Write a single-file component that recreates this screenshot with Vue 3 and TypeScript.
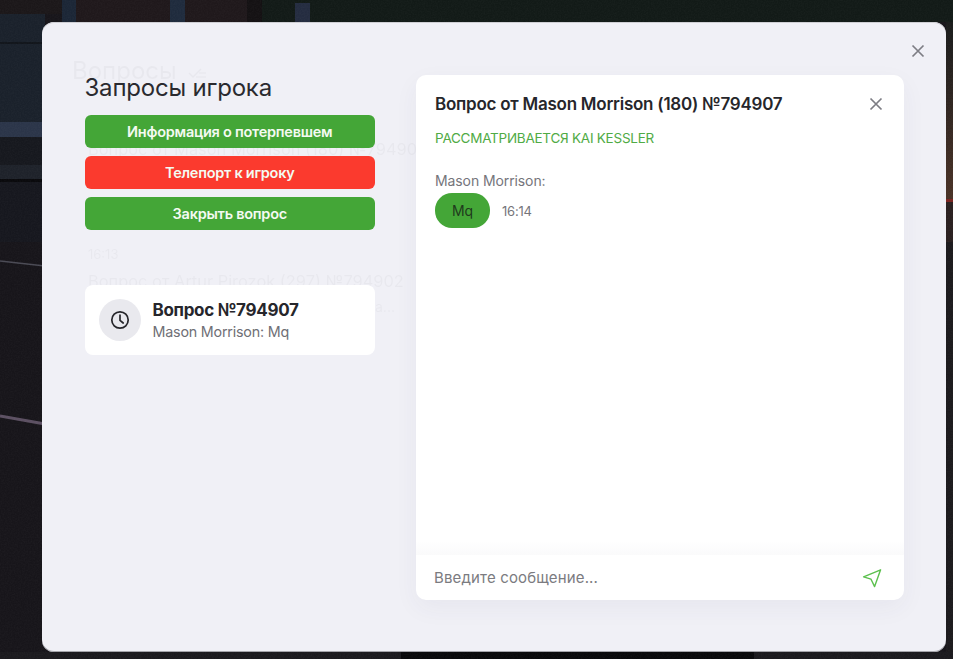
<script setup lang="ts">
const actions = [
  { label: 'Информация о потерпевшем', tone: 'green' },
  { label: 'Телепорт к игроку', tone: 'red' },
  { label: 'Закрыть вопрос', tone: 'green' },
]
</script>

<template>
  <div class="screen">
    <svg class="scene" width="953" height="659" viewBox="0 0 953 659" aria-hidden="true">
      <defs>
        <filter id="grain" x="0" y="0" width="100%" height="100%">
          <feTurbulence type="fractalNoise" baseFrequency="0.7" numOctaves="2" seed="4" />
          <feColorMatrix values="0 0 0 0 1  0 0 0 0 1  0 0 0 0 1  0.5 0 0 0 -0.15" />
        </filter>
        <linearGradient id="glow" x1="0" y1="0" x2="0" y2="1">
          <stop offset="0" stop-color="#1a1c1c" />
          <stop offset="0.4" stop-color="#2c2420" />
          <stop offset="1" stop-color="#4a3226" />
        </linearGradient>
      </defs>
      <rect width="953" height="659" fill="#17151a" />
      <rect x="0" y="0" width="62" height="14" fill="#1b1719" />
      <rect x="0" y="14" width="45" height="110" fill="#1a212b" />
      <rect x="0" y="42" width="45" height="2" fill="#11151b" />
      <rect x="0" y="122" width="45" height="15" fill="#2b3549" />
      <rect x="0" y="137" width="45" height="28" fill="#16181e" />
      <rect x="0" y="165" width="45" height="14" fill="#1e222a" />
      <rect x="0" y="179" width="45" height="3" fill="#09090c" />
      <rect x="0" y="182" width="45" height="60" fill="#16171e" />
      <rect x="62" y="0" width="14" height="22" fill="#1b2636" />
      <rect x="76" y="0" width="36" height="22" fill="#1f181b" />
      <rect x="112" y="0" width="58" height="22" fill="#1f181b" />
      <rect x="170" y="0" width="15" height="22" fill="#1f2b3d" />
      <rect x="185" y="0" width="62" height="22" fill="#1f181b" />
      <rect x="247" y="0" width="15" height="22" fill="#141113" />
      <rect x="262" y="0" width="691" height="22" fill="#121a17" />
      <rect x="295" y="3" width="15" height="19" fill="#242c40" />
      <path d="M0 261 L45 266" stroke="#4a4a54" stroke-width="1.5" />
      <path d="M0 416 L45 424" stroke="#5c5062" stroke-width="3" />
      <rect x="946" y="22" width="7" height="178" fill="url(#glow)" />
      <rect x="946" y="199" width="7" height="3" fill="#7a2421" />
      <rect x="946" y="202" width="7" height="40" fill="#2a2020" />
      <rect x="946" y="242" width="7" height="417" fill="#1c1a1d" />
      <rect x="0" y="652" width="953" height="7" fill="#1b1a1e" />
      <rect x="401" y="652" width="353" height="7" fill="#09090b" />
      <rect width="953" height="659" filter="url(#grain)" opacity="0.1" />
    </svg>

    <section class="modal">
      <button class="close modal-close" aria-label="Закрыть">
        <svg width="14" height="14" viewBox="0 0 14 14"><path d="M1.5 1.5l11 11M12.5 1.5l-11 11" /></svg>
      </button>

      <div class="ghost" aria-hidden="true">
        <span class="ghost-title">Вопросы</span>
        <svg class="ghost-check" width="20" height="12" viewBox="0 0 20 12"><path d="M1 6l4 4 8-8M8 10h10M11 6h7" /></svg>
        <span class="ghost-line one">Вопрос от Mason Morrison (180) №794907</span>
        <span class="ghost-time">16:13</span>
        <span class="ghost-line two">Вопрос от Artur Pirozok (297) №794902</span>
        <span class="ghost-more">а...</span>
      </div>

      <aside class="side">
        <h1 class="side-title">Запросы игрока</h1>
        <div class="actions">
          <button v-for="a in actions" :key="a.label" class="action" :class="a.tone">{{ a.label }}</button>
        </div>
        <article class="ticket">
          <span class="ticket-icon">
            <svg width="20" height="20" viewBox="0 0 20 20">
              <circle cx="10" cy="10" r="8.2" />
              <path d="M10 5.2V10.4L13.2 13" />
            </svg>
          </span>
          <div class="ticket-text">
            <strong>Вопрос №794907</strong>
            <span>Mason Morrison: Mq</span>
          </div>
        </article>
      </aside>

      <main class="chat">
        <header class="chat-head">
          <h2>Вопрос от Mason Morrison (180) №794907</h2>
          <button class="close" aria-label="Закрыть чат">
            <svg width="14" height="14" viewBox="0 0 14 14"><path d="M1.5 1.5l11 11M12.5 1.5l-11 11" /></svg>
          </button>
        </header>
        <p class="status">РАССМАТРИВАЕТСЯ KAI KESSLER</p>
        <div class="messages">
          <div class="author">Mason Morrison:</div>
          <div class="message">
            <span class="bubble">Mq</span>
            <time>16:14</time>
          </div>
        </div>
        <footer class="composer">
          <span class="placeholder">Введите сообщение...</span>
          <svg class="send" width="20" height="20" viewBox="0 0 20 20">
            <path d="M18.6 1.8L1.6 8.8L9 11.2L12.6 18.6Z" />
          </svg>
        </footer>
      </main>
    </section>
  </div>
</template>

<style>
html, body { margin: 0; background: #17151a; }
</style>

<style scoped>
.screen {
  position: relative;
  width: 953px;
  height: 659px;
  overflow: hidden;
  padding: 22px 7px 7px 42px;
  box-sizing: border-box;
  font-family: Inter, "Noto Sans", sans-serif;
  color: #26262b;
}
.scene { position: absolute; inset: 0; }
.modal {
  position: relative;
  height: 630px;
  box-sizing: border-box;
  padding: 53px 42px 52px 42.5px;
  display: flex;
  gap: 41px;
  background: #f0f0f6;
  border-radius: 12px;
  box-shadow: inset 0 -1px #a5a5ab, inset 0 1px #cfcfd4;
}
.close {
  display: flex;
  padding: 0;
  border: 0;
  background: none;
}
.close path { fill: none; stroke: #7d7d84; stroke-width: 1.7; }
.modal-close { position: absolute; top: 22px; right: 21px; }
.ghost { position: absolute; inset: 0; color: #26262b; opacity: 0.03; pointer-events: none; }
.ghost span { position: absolute; white-space: nowrap; }
.ghost-title { left: 30px; top: 34px; font-size: 24px; }
.ghost-check { position: absolute; left: 146px; top: 45px; }
.ghost-check path { fill: none; stroke: #26262b; stroke-width: 1.5; }
.ghost-line { left: 46px; font-size: 16.4px; }
.ghost-line.one { top: 117px; }
.ghost-line.two { top: 249px; }
.ghost-time { left: 46px; top: 224px; font-size: 13px; }
.ghost-more { left: 333px; top: 276px; font-size: 14px; }
.side { width: 290.5px; flex: none; position: relative; }
.side-title {
  margin: -1px 0 13px;
  font-size: 24px;
  line-height: 28px;
  font-weight: 400;
  letter-spacing: -0.2px;
  color: #2a2a2f;
}
.actions { display: flex; flex-direction: column; gap: 8px; }
.action {
  height: 33px;
  border: 0;
  border-radius: 6px;
  color: #f4faf2;
  font: 600 14.5px/33px Inter, "Noto Sans", sans-serif;
  letter-spacing: -0.25px;
  padding: 0;
}
.action.green { background: #44a637; }
.action.red { background: #fb3a2e; }
.ticket {
  margin-top: 55px;
  height: 70px;
  box-sizing: border-box;
  padding: 0 14px;
  display: flex;
  align-items: center;
  gap: 12px;
  background: #fff;
  border-radius: 8px;
}
.ticket-icon {
  width: 42px;
  height: 42px;
  display: flex;
  align-items: center;
  justify-content: center;
  background: #e9e9ee;
  border-radius: 50%;
  flex: none;
}
.ticket-icon circle, .ticket-icon path { fill: none; stroke: #26262b; stroke-width: 1.7; stroke-linecap: round; stroke-linejoin: round; }
.ticket-text { display: flex; flex-direction: column; gap: 1px; }
.ticket-text strong { font-size: 17px; line-height: 22px; font-weight: 700; letter-spacing: -0.3px; }
.ticket-text span { font-size: 14.3px; line-height: 19px; color: #6f6f76; letter-spacing: -0.2px; }
.chat {
  position: relative;
  width: 488px;
  flex: none;
  box-sizing: border-box;
  display: flex;
  flex-direction: column;
  background: #fff;
  border-radius: 10px;
  box-shadow: 0 8px 24px rgba(60, 60, 90, 0.05);
  overflow: hidden;
}
.chat-head {
  display: flex;
  align-items: center;
  justify-content: space-between;
  padding: 18px 21px 0 19px;
  height: 22px;
}
.chat-head h2 { margin: 0; font-size: 17px; line-height: 22px; font-weight: 600; letter-spacing: -0.25px; white-space: nowrap; }
.status { margin: 14px 0 0 19px; height: 18px; font-size: 13.5px; line-height: 18px; color: #50ab45; letter-spacing: -0.25px; }
.messages { flex: 1; padding: 24px 19px 0; background: linear-gradient(to bottom, #fff calc(100% - 14px), #fafafb); }
.author { font-size: 14px; line-height: 19px; color: #75757b; letter-spacing: -0.1px; }
.message { margin-top: 3px; display: flex; align-items: center; gap: 12px; }
.bubble {
  width: 55px;
  height: 35px;
  display: flex;
  align-items: center;
  justify-content: center;
  background: #44a637;
  border-radius: 17px;
  font-size: 14px;
  color: #1f3a1d;
}
.message time { font-size: 13px; color: #75757b; letter-spacing: -0.2px; }
.composer {
  height: 45px;
  flex: none;
  display: flex;
  align-items: center;
  justify-content: space-between;
  padding: 0 22px 0 18px;
}
.placeholder { font-size: 15px; color: #7b7b80; letter-spacing: 0.15px; }
.send path { fill: none; stroke: #5cc04e; stroke-width: 1.4; stroke-linejoin: round; }
</style>
